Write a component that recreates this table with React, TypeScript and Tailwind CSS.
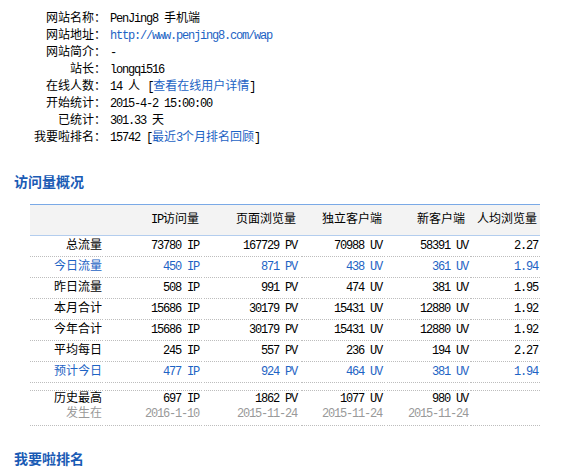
import React from 'react';
import clsx from 'clsx';

// half-width latin text, narrowed to the 6px advance of the original
const L: React.FC<{ children: React.ReactNode; className?: string }> = ({ children, className }) => (
  <span className={clsx('text-[12px] tracking-[-1.2px]', className)}>{children}</span>
);

const info: { label: string; value: React.ReactNode }[] = [
  { label: '网站名称：', value: <><L>PenJing8 </L>手机端</> },
  { label: '网站地址：', value: <L className="text-[#1d63c4]">http://www.penjing8.com/wap</L> },
  { label: '网站简介：', value: <L>-</L> },
  { label: '站长：', value: <L>longqi516</L> },
  { label: '在线人数：', value: <><L>14 </L>人 <L>[</L><span className="text-[#1d63c4]">查看在线用户详情</span><L>]</L></> },
  { label: '开始统计：', value: <L>2015-4-2 15:00:00</L> },
  { label: '已统计：', value: <><L>301.33 </L>天</> },
  { label: '我要啦排名：', value: <><L>15742 [</L><span className="text-[#1d63c4]">最近<L>3</L>个月排名回顾</span><L>]</L></> },
];

const rows = [
  { name: '总流量', blue: false, v: ['73780 IP', '167729 PV', '70988 UV', '58391 UV', '2.27'] },
  { name: '今日流量', blue: true, v: ['450 IP', '871 PV', '438 UV', '361 UV', '1.94'] },
  { name: '昨日流量', blue: false, v: ['508 IP', '991 PV', '474 UV', '381 UV', '1.95'] },
  { name: '本月合计', blue: false, v: ['15686 IP', '30179 PV', '15431 UV', '12880 UV', '1.92'] },
  { name: '今年合计', blue: false, v: ['15686 IP', '30179 PV', '15431 UV', '12880 UV', '1.92'] },
  { name: '平均每日', blue: false, v: ['245 IP', '557 PV', '236 UV', '194 UV', '2.27'] },
  { name: '预计今日', blue: true, v: ['477 IP', '924 PV', '464 UV', '381 UV', '1.94'] },
];

const pads = ['pr-[1px]', 'pr-[3px]', 'pr-[2px]', 'pr-[3px]', 'pr-[0px]', 'pr-[2px]'];
const grid = 'grid grid-cols-[73px_97px_95px_84px_81px_70px] gap-x-[2px]';
const cell = 'border-b border-dotted border-[#bdbdbd] text-right';

export default function App() {
  return (
    <div className="w-[564px] h-[474px] bg-white text-black text-[12px] font-['Liberation_Mono','Noto_Sans_CJK_SC',monospace] overflow-hidden">
      <div className="pt-[11px]">
        {info.map((r) => (
          <div key={r.label} className="flex h-[17px] items-center leading-[17px] whitespace-pre">
            <div className="w-[106px] text-right">{r.label}</div>
            <div className="pl-[4px]">{r.value}</div>
          </div>
        ))}
      </div>

      <h2 className="mt-[24px] ml-[14px] h-[20px] leading-[20px] text-[14px] font-bold text-[#1a5bb5] font-['Noto_Sans_CJK_SC',sans-serif]">
        访问量概况
      </h2>

      <div className="mt-[13px] ml-[30px] w-[510px]">
        <div className={clsx(grid, 'h-[32px] items-center border-t border-b border-t-[#7aa9e6] border-b-[#b3cdee] bg-[#f3f3f3]')}>
          {['', 'IP访问量', '页面浏览量', '独立客户端', '新客户端', '人均浏览量'].map((h, i) => (
            <div key={i} className={clsx('text-right', i === 0 ? 'pr-[1px]' : 'pr-[3px]', i === 4 && 'pr-[1px]')}>
              {h.startsWith('IP') ? <><L>IP</L>访问量</> : h}
            </div>
          ))}
        </div>

        {rows.map((r) => (
          <div key={r.name} className={clsx(grid, r.blue && 'text-[#1d63c4]')}>
            <div className={clsx(cell, pads[0], 'h-[21px] leading-[20px]')}>{r.name}</div>
            {r.v.map((v, i) => (
              <div key={i} className={clsx(cell, pads[i + 1], 'h-[21px] leading-[20px] whitespace-pre')}>
                <L>{v}</L>
              </div>
            ))}
          </div>
        ))}

        <div className={grid}>
          {pads.map((p, i) => (
            <div key={i} className={clsx(cell, 'h-[8px]')} />
          ))}
        </div>

        <div className={grid}>
          <div className={clsx(cell, pads[0], 'h-[35px] pt-[1px] leading-[15px]')}>
            <div>历史最高</div>
            <div className="text-[#999]">发生在</div>
          </div>
          {[
            ['697 IP', '2016-1-10'],
            ['1862 PV', '2015-11-24'],
            ['1077 UV', '2015-11-24'],
            ['980 UV', '2015-11-24'],
          ].map(([a, b], i) => (
            <div key={i} className={clsx(cell, pads[i + 1], 'h-[35px] pt-[1px] leading-[15px] whitespace-pre')}>
              <div><L>{a}</L></div>
              <div className="text-[#999]"><L>{b}</L></div>
            </div>
          ))}
          <div className={clsx(cell, 'h-[35px]')} />
        </div>
      </div>

      <h2 className="mt-[22px] ml-[14px] h-[20px] leading-[20px] text-[14px] font-bold text-[#1a5bb5] font-['Noto_Sans_CJK_SC',sans-serif]">
        我要啦排名
      </h2>
    </div>
  );
}
